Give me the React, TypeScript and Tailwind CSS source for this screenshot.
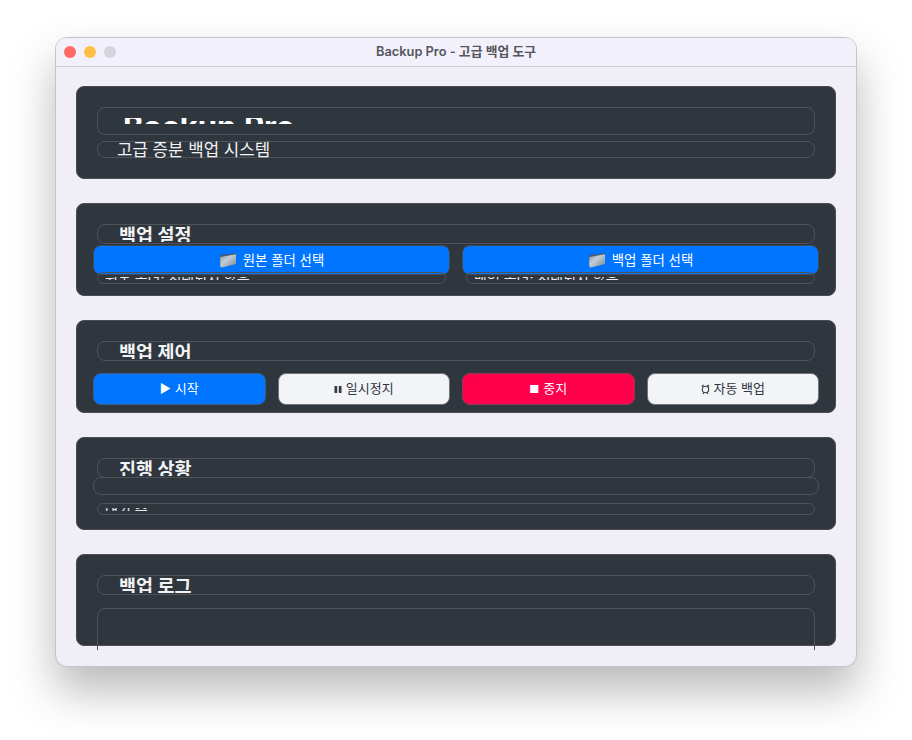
import React from 'react';

const KR = "font-['Inter','Noto_Sans_CJK_KR',sans-serif]";

const Folder = () => (
  <svg width="18" height="15" viewBox="0 0 18 15" className="shrink-0">
    <defs>
      <linearGradient id="folderFill" x1="0" y1="0" x2="1" y2="1">
        <stop offset="0" stopColor="#7f909c" />
        <stop offset="0.4" stopColor="#c3ced5" />
        <stop offset="1" stopColor="#71889a" />
      </linearGradient>
    </defs>
    <path d="M1 2.6 L6 1 L7 1.8 L17 0 L17 11 L3 14.6 Q1.4 14.6 1.2 13 Z" fill="#4d5963" />
    <path d="M1.2 4 L17 1.2 L17 11 L3 14.6 Q1.4 14.6 1.2 13 Z" fill="url(#folderFill)" />
  </svg>
);

const Pause = () => (
  <svg width="8" height="9" viewBox="0 0 8 9" className="shrink-0">
    <rect x="0.5" y="1" width="2.7" height="7" rx="0.5" fill="#333a42" />
    <rect x="4.8" y="1" width="2.7" height="7" rx="0.5" fill="#333a42" />
  </svg>
);

const Alarm = () => (
  <svg width="9" height="11" viewBox="0 0 9 11" fill="none" stroke="#333a42" className="shrink-0">
    <circle cx="4.5" cy="5.5" r="3.2" strokeWidth="1.1" />
    <path d="M0.8 2.5 L2.5 1 M8.2 2.5 L6.5 1 M2 9.8 L2.8 8.6 M7 9.8 L6.2 8.6" strokeWidth="1.2" />
  </svg>
);

const Box = ({ className = '', children }: { className?: string; children?: React.ReactNode }) => (
  <div className={`border border-[#4f5359] rounded-lg ${className}`}>{children}</div>
);

const SectionTitle = ({ text }: { text: string }) => (
  <Box className="mx-1 h-5 overflow-hidden shrink-0">
    <div className="pl-[21px] h-[17px] overflow-hidden text-[18.5px] leading-5 font-bold text-[#f2f3f5] whitespace-nowrap">{text}</div>
  </Box>
);

const Card = ({ children }: { children: React.ReactNode }) => (
  <section className="h-[93px] shrink-0 bg-[#30363e] border border-[#4a4e54] rounded-lg px-4 pt-5">
    {children}
  </section>
);

const Btn = ({ tone, className = '', children }: { tone: 'blue' | 'red' | 'light'; className?: string; children: React.ReactNode }) => {
  const tones = {
    blue: 'bg-[#0075ff] text-white border-[#3b5d8c]',
    red: 'bg-[#ff004c] text-white border-[#8c3c56]',
    light: 'bg-[#f3f4f7] text-[#2f353d] border-[#70747a]',
  };
  return (
    <button className={`flex items-center justify-center rounded-lg border font-normal ${tones[tone]} ${className}`}>
      {children}
    </button>
  );
};

// only a thin strip of the label shows through, as in the reference
const ClippedLine = ({ className = '', text }: { className?: string; text: string }) => (
  <Box className={`overflow-hidden ${className}`}>
    <div className="ml-[7px] mt-1 h-[3px] overflow-hidden text-[14px] leading-[14px] text-[#e8eaed] whitespace-nowrap">
      <div className="-mt-[5px]">{text}</div>
    </div>
  </Box>
);

export default function App() {
  return (
    <div className={`w-[912px] h-[740px] bg-white pt-[37px] pl-[55px] overflow-hidden ${KR}`}>
      <div className="w-[802px] h-[630px] rounded-[12px] border border-[#c4c4c8] bg-[#f0eff5] shadow-[0_24px_45px_0_rgba(0,0,0,0.28)] overflow-hidden">
        <header className="relative flex items-center h-[29px] bg-[#f2f0fa] border-b border-[#cfcfd3] pl-2 gap-2">
          <span className="w-3 h-3 rounded-full bg-[#ff6a66]" />
          <span className="w-3 h-3 rounded-full bg-[#ffbf47]" />
          <span className="w-3 h-3 rounded-full bg-[#d6d5de]" />
          <h1 className="absolute inset-x-0 text-center text-[12.8px] font-semibold text-[#55565c]">Backup Pro - 고급 백업 도구</h1>
        </header>

        <main className="flex flex-col gap-6 px-5 pt-[19px]">
          <Card>
            <Box className="mx-1 h-7 overflow-hidden">
              <div className="ml-[25px] mt-[10px] h-[6px] overflow-hidden">
                <div className="-mt-[7px] text-[31px] leading-[32px] font-bold text-white whitespace-nowrap">Backup Pro</div>
              </div>
            </Box>
            <Box className="mx-1 mt-[6px] h-[17px]">
              <div className="pl-[19px] text-[16.8px] leading-[17px] text-[#f2f3f5] whitespace-nowrap">고급 증분 백업 시스템</div>
            </Box>
          </Card>

          <Card>
            <SectionTitle text="백업 설정" />
            <div className="mt-px flex gap-3 h-[30px]">
              <Btn tone="blue" className="flex-1 gap-1.5 text-[13.4px] border-[#444b55]"><Folder />원본 폴더 선택</Btn>
              <Btn tone="blue" className="flex-1 gap-1.5 text-[13.4px] border-[#444b55]"><Folder />백업 폴더 선택</Btn>
            </div>
            <div className="relative -mt-[3px] mx-1 flex gap-5">
              <ClippedLine className="flex-1 h-3" text="원본 폴더: 선택되지 않음" />
              <ClippedLine className="flex-1 h-3" text="백업 폴더: 선택되지 않음" />
            </div>
          </Card>

          <Card>
            <SectionTitle text="백업 제어" />
            <div className="mt-3 grid grid-cols-4 gap-3 h-8">
              <Btn tone="blue" className="gap-1 text-[13px]"><span className="text-[12px]">▶</span>시작</Btn>
              <Btn tone="light" className="gap-1 text-[13px]"><Pause />일시정지</Btn>
              <Btn tone="red" className="gap-1 text-[13px]"><span className="text-[11px]">■</span>중지</Btn>
              <Btn tone="light" className="gap-1 text-[13px]"><Alarm />자동 백업</Btn>
            </div>
          </Card>

          <Card>
            <SectionTitle text="진행 상황" />
            <Box className="-mt-px h-[18px]" />
            <ClippedLine className="mx-1 mt-2 h-3" text="대기 중" />
          </Card>

          <section className="h-[92px] shrink-0 bg-[#30363e] border border-[#4a4e54] rounded-lg px-4 pt-5">
            <div className="h-[75px] overflow-hidden">
              <SectionTitle text="백업 로그" />
              <Box className="mx-1 mt-[13px] h-[80px]" />
            </div>
          </section>
        </main>
      </div>
    </div>
  );
}
